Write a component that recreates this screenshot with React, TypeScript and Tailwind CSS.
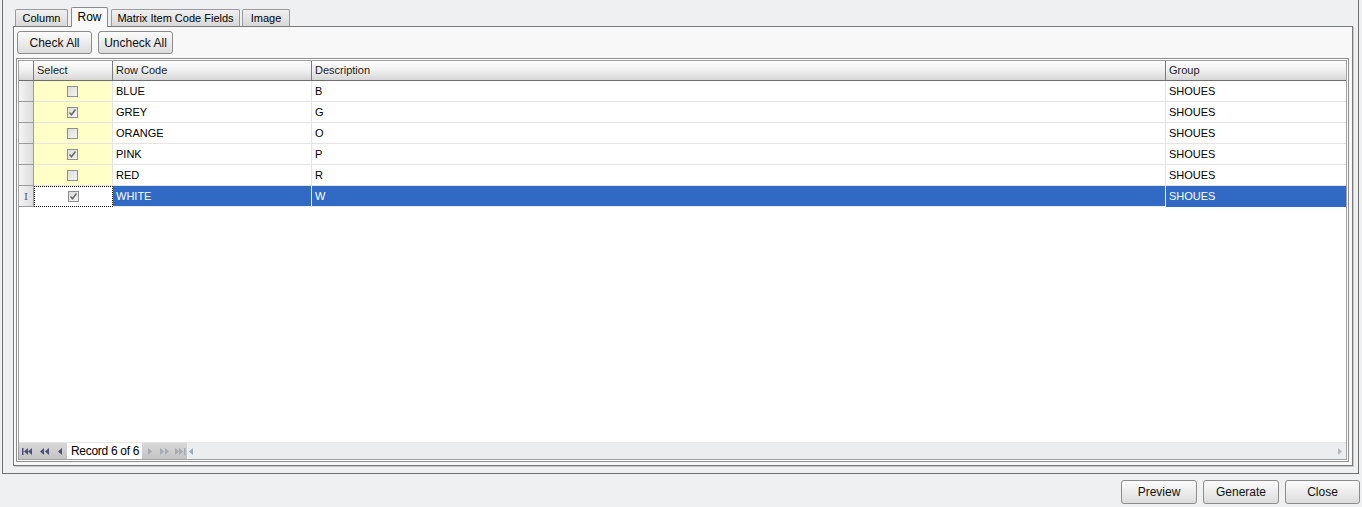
import React from "react";

interface IRow {
  code: string;
  desc: string;
  group: string;
  checked: boolean;
}

const rows: IRow[] = [
  { code: "BLUE", desc: "B", group: "SHOUES", checked: false },
  { code: "GREY", desc: "G", group: "SHOUES", checked: true },
  { code: "ORANGE", desc: "O", group: "SHOUES", checked: false },
  { code: "PINK", desc: "P", group: "SHOUES", checked: true },
  { code: "RED", desc: "R", group: "SHOUES", checked: false },
  { code: "WHITE", desc: "W", group: "SHOUES", checked: true },
];

function CheckBox({ checked }: { checked: boolean }) {
  return (
    <div className="w-[11px] h-[11px] border border-[#8e8f8f] bg-gradient-to-br from-[#dcdcdc] to-[#f4f4f4] flex items-center justify-center">
      {checked ? (
        <svg width="9" height="9" viewBox="0 0 9 9">
          <path d="M1.5 4.5 L3.5 6.8 L7.5 1.5" stroke="#6b6b6b" strokeWidth="1.6" fill="none" />
        </svg>
      ) : null}
    </div>
  );
}

function Arrow({ dir, bar, double, color }: { dir: "l" | "r"; bar?: boolean; double?: boolean; color: string }) {
  const tri = (x: number) =>
    dir === "l" ? `M${x + 4} 1 L${x} 4.5 L${x + 4} 8 Z` : `M${x} 1 L${x + 4} 4.5 L${x} 8 Z`;
  return (
    <svg width="12" height="9" viewBox="0 0 12 9">
      {dir === "l" ? (
        <>
          {bar ? <rect x="0" y="1" width="1.5" height="7" fill={color} /> : null}
          <path d={tri(bar || double ? 2 : 4)} fill={color} />
          {double ? <path d={tri(bar ? 6 : 7)} fill={color} /> : null}
        </>
      ) : (
        <>
          <path d={tri(double ? 1 : 4)} fill={color} />
          {double ? <path d={tri(bar ? 5 : 6)} fill={color} /> : null}
          {bar ? <rect x="10" y="1" width="1.5" height="7" fill={color} /> : null}
        </>
      )}
    </svg>
  );
}

const btn =
  "border border-[#8c8c8c] rounded-[3px] bg-gradient-to-b from-[#fbfbfb] via-[#ececec] to-[#dcdcdc] text-[12px] text-[#111] flex items-center justify-center whitespace-nowrap";

const tab =
  "h-[17px] border border-b-0 border-[#9a9a9a] rounded-t-[2px] bg-gradient-to-b from-[#f0f0f0] to-[#d8d8d8] flex items-center justify-center whitespace-nowrap";

export default function App() {
  return (
    <div
      className="w-[1362px] h-[507px] bg-[#eff0f2] overflow-hidden text-[11px] text-black"
      style={{ fontFamily: '"Liberation Sans", Arial, sans-serif' }}
    >
      {/* outer frame */}
      <div className="ml-[2px] w-[1357px] h-[474px] border-x border-b border-[#6f6f6f] flex flex-col">
        {/* tabs */}
        <div className="h-[26px] pl-[12px] flex items-end">
          <div className={`${tab} w-[53px]`}>Column</div>
          <div className="ml-[3px] w-[37px] h-[20px] border border-b-0 border-[#8a8a8a] rounded-t-[2px] bg-[#f8f9f8] flex items-center justify-center pb-[2px] relative top-[1px] text-[12px]">
            Row
          </div>
          <div className={`${tab} ml-[3px] w-[129px]`}>Matrix Item Code Fields</div>
          <div className={`${tab} ml-[2px] w-[48px]`}>Image</div>
        </div>

        {/* tab page */}
        <div className="ml-[10px] w-[1340px] h-[440px] border border-[#7a7a7a] bg-[#f7f8f7] shadow-[1px_1px_0_#c8c8c8] flex flex-col">
          <div className="h-[31px] pt-[4px] pl-[3px] flex gap-[6px]">
            <div className={`${btn} w-[75px] h-[23px]`}>Check All</div>
            <div className={`${btn} w-[75px] h-[23px]`}>Uncheck All</div>
          </div>

          {/* grid */}
          <div className="ml-[2px] w-[1333px] h-[404px] border border-[#8f8f8f] p-[1px] bg-white">
            <div className="w-full h-full border border-[#a0a0a0] flex flex-col">
              {/* header */}
              <div className="h-[20px] flex bg-gradient-to-b from-[#fdfdfd] via-[#f0f0f0] to-[#d6d6d6] border-b border-[#6e6e6e] text-[#1a1a1a]">
                <div className="w-[15px] border-r border-[#7a7a7a]" />
                <div className="w-[79px] border-r border-[#7a7a7a] pl-[3px] flex items-center">Select</div>
                <div className="w-[199px] border-r border-[#7a7a7a] pl-[3px] flex items-center">Row Code</div>
                <div className="w-[854px] border-r border-[#7a7a7a] pl-[3px] flex items-center">Description</div>
                <div className="flex-1 pl-[3px] flex items-center">Group</div>
              </div>

              {/* rows */}
              {rows.map((r, i) => {
                const sel = i === rows.length - 1;
                return (
                  <div key={r.code} className="h-[21px] flex">
                    <div className="w-[15px] border-r border-b border-[#9c9c9c] bg-gradient-to-r from-[#f3f3f3] to-[#dedede] flex items-center justify-center text-[#555]">
                      {sel ? <span className="text-[10px]" style={{ fontFamily: '"DejaVu Serif", serif' }}>I</span> : null}
                    </div>
                    <div
                      className={
                        sel
                          ? "w-[79px] border border-dotted border-black bg-white flex items-center justify-center pr-[1px]"
                          : "w-[79px] border-r border-b border-[#e4e4e4] bg-[#ffffc8] flex items-center justify-center pr-[1px]"
                      }
                    >
                      <CheckBox checked={r.checked} />
                    </div>
                    <div className={`w-[199px] border-r border-b pl-[3px] flex items-center ${sel ? "bg-[#316ac5] text-white border-[#e8ecf6]" : "border-[#e4e4e4]"}`}>
                      {r.code}
                    </div>
                    <div className={`w-[854px] border-r border-b pl-[3px] flex items-center ${sel ? "bg-[#316ac5] text-white border-[#e8ecf6]" : "border-[#e4e4e4]"}`}>
                      {r.desc}
                    </div>
                    <div className={`flex-1 border-b pl-[3px] flex items-center ${sel ? "bg-[#316ac5] text-white border-[#316ac5]" : "border-[#e4e4e4]"}`}>
                      {r.group}
                    </div>
                  </div>
                );
              })}

              <div className="flex-1" />

              {/* navigator */}
              <div className="h-[17px] flex items-stretch border-t border-[#e6e6e6] bg-[#ecedee]">
                <div className="w-[48px] bg-gradient-to-b from-[#d8d8d8] to-[#c4c4c4] flex items-center pl-[3px] gap-[4px]">
                  <Arrow dir="l" bar double color="#4b4f7c" />
                  <Arrow dir="l" double color="#4b4f7c" />
                  <Arrow dir="l" color="#4b4f7c" />
                </div>
                <div className="w-[75px] bg-white flex items-center pl-[4px] text-[12px] whitespace-nowrap tracking-[-0.3px]">Record 6 of 6</div>
                <div className="w-[45px] bg-gradient-to-b from-[#d8d8d8] to-[#c4c4c4] flex items-center pl-[2px] gap-[3px]">
                  <Arrow dir="r" color="#a6a8b2" />
                  <Arrow dir="r" double color="#a6a8b2" />
                  <Arrow dir="r" bar double color="#a6a8b2" />
                </div>
                <div className="flex-1 flex items-center justify-between pl-[1px] pr-[3px]">
                  <svg width="8" height="9" viewBox="0 0 8 9">
                    <path d="M5 1 L1 4.5 L5 8 Z" fill="#9aa9bb" />
                  </svg>
                  <svg width="8" height="9" viewBox="0 0 8 9">
                    <path d="M3 1 L7 4.5 L3 8 Z" fill="#b4b8bc" />
                  </svg>
                </div>
              </div>
            </div>
          </div>
        </div>
      </div>

      {/* bottom buttons */}
      <div className="h-[33px] flex items-center justify-end gap-[6px] pr-[2px] pt-[2px]">
        <div className={`${btn} w-[76px] h-[24px]`}>Preview</div>
        <div className={`${btn} w-[76px] h-[24px]`}>Generate</div>
        <div className={`${btn} w-[75px] h-[24px]`}>Close</div>
      </div>
    </div>
  );
}
